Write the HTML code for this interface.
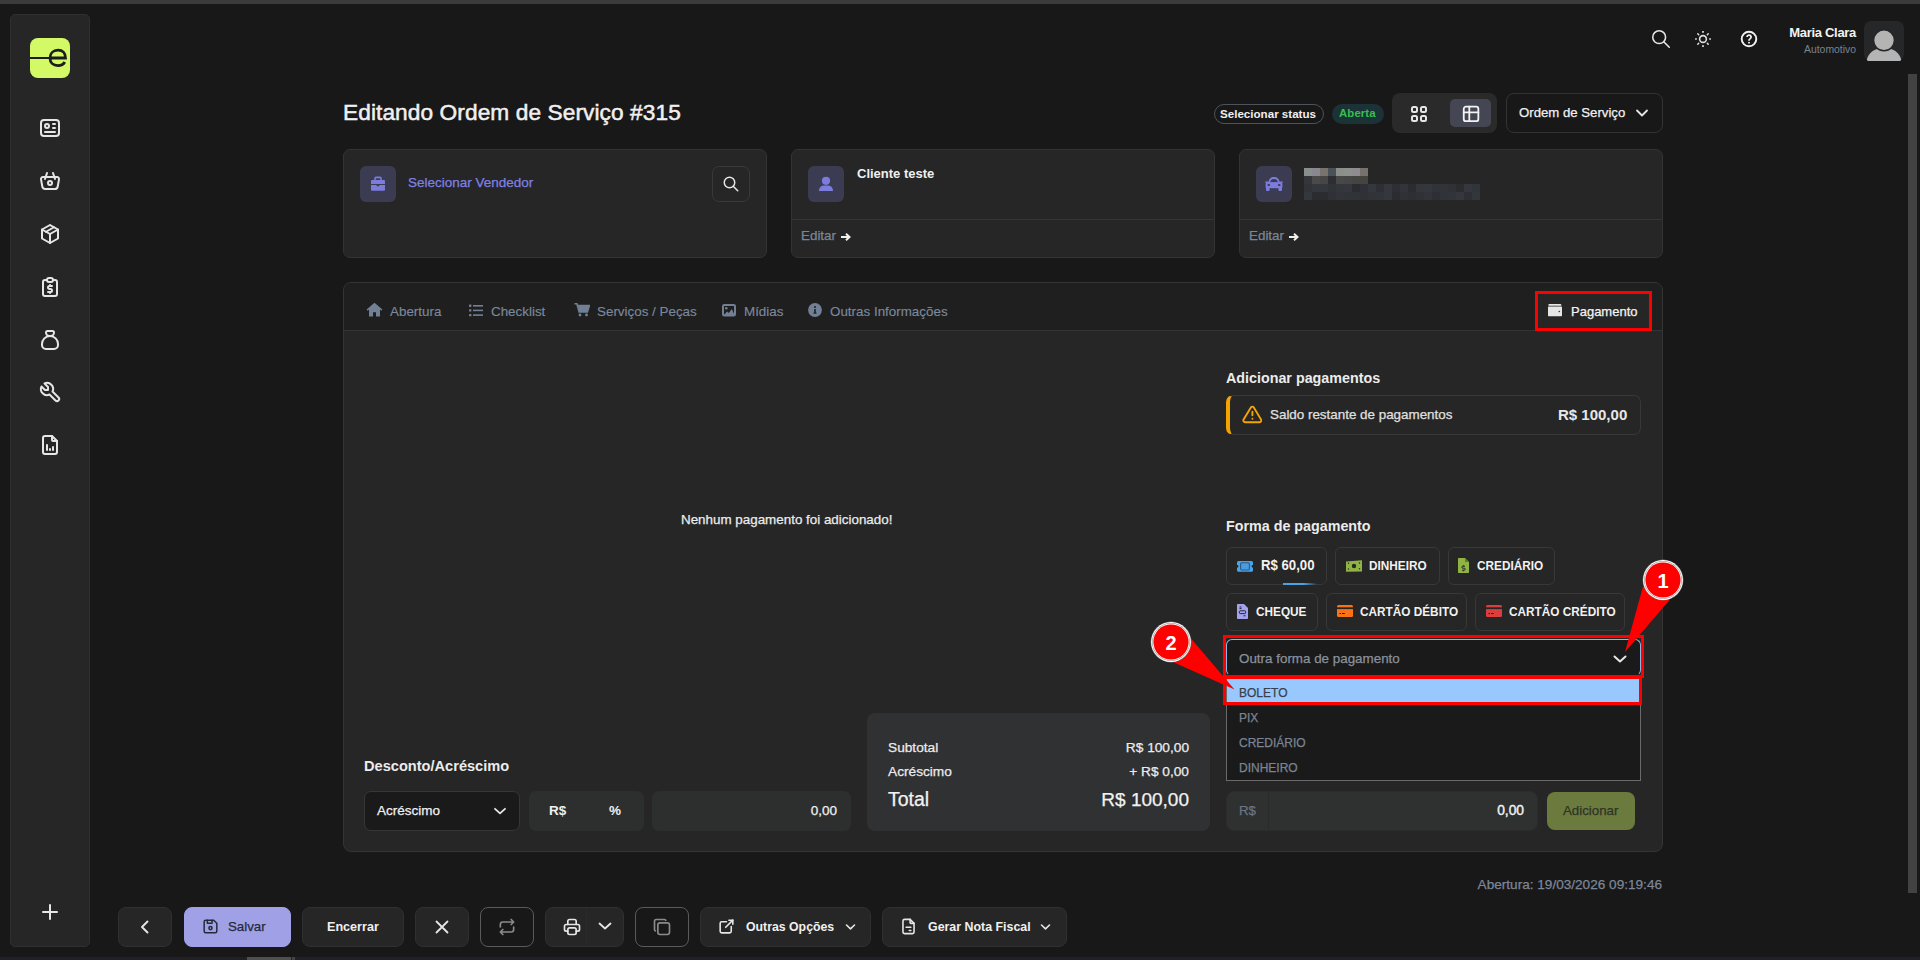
<!DOCTYPE html>
<html><head><meta charset="utf-8">
<style>
*{box-sizing:border-box;margin:0;padding:0}
html,body{width:1920px;height:960px;overflow:hidden;background:#181818;font-family:"Liberation Sans",sans-serif;color:#e6e6e6}
.a{position:absolute}
.t{position:absolute;white-space:nowrap;line-height:1;-webkit-text-stroke:0.25px currentColor}
svg{display:block}
.ico{position:absolute;fill:none;stroke:#e6e6e6;stroke-width:2;stroke-linecap:round;stroke-linejoin:round}
.card{position:absolute;background:#262626;border:1px solid #333;border-radius:7px}
.pbtn{position:absolute;height:38px;border:1px solid #383838;border-radius:6px;background:#262626}
.tab{top:305px;font-size:13.4px;color:#7b889c;-webkit-text-stroke:0.15px #7b889c}
.pbt{font-size:11.8px;font-weight:700;-webkit-text-stroke:0;color:#f2f2f2;transform:scaleY(1.14);transform-origin:0 85%}
.bb{position:absolute;top:907px;height:40px;border:1px solid #303030;border-radius:8px;background:#262626}
</style></head><body>
<!-- top strip -->
<div class="a" style="left:0;top:0;width:1920px;height:4px;background:#3b3b3b"></div>
<!-- bottom strip -->
<div class="a" style="left:0;top:957px;width:1920px;height:3px;background:#202026"></div>
<div class="a" style="left:247px;top:957px;width:44px;height:3px;background:#4f4f4f"></div><div class="a" style="left:292px;top:957px;width:3px;height:3px;background:#444"></div>

<!-- sidebar -->
<div class="a" style="left:10px;top:14px;width:80px;height:933px;background:#262626;border:1px solid #2f2f2f;border-radius:5px"></div>
<div class="a" style="left:30px;top:38px;width:40px;height:40px;background:#d3f966;border-radius:8px;overflow:hidden">
  <div class="a" style="left:0;top:18.6px;width:20px;height:2.8px;background:#1c1c1c"></div>
  <svg class="a" style="left:17px;top:8px" width="22" height="24" viewBox="0 0 22 24"><path d="M3 12 H18.5 C18.5 7 15.5 4.2 11 4.2 C6.2 4.2 3 7.5 3 12 C3 16.6 6.2 19.6 11 19.6 C14.2 19.6 16.5 18.2 17.8 16" fill="none" stroke="#1c1c1c" stroke-width="2.8"/></svg>
</div>
<!-- sidebar icons -->
<svg class="ico" style="left:38px;top:116px" width="24" height="24" viewBox="0 0 24 24"><path d="M3 7a3 3 0 0 1 3 -3h12a3 3 0 0 1 3 3v10a3 3 0 0 1 -3 3h-12a3 3 0 0 1 -3 -3z"/><path d="M9 10m-2 0a2 2 0 1 0 4 0a2 2 0 1 0 -4 0"/><path d="M15 8l2 0"/><path d="M15 12l2 0"/><path d="M7 16l10 0"/></svg>
<svg class="ico" style="left:38px;top:169px" width="24" height="24" viewBox="0 0 24 24"><path d="M10 14a2 2 0 1 0 4 0a2 2 0 0 0 -4 0"/><path d="M5.001 8h13.999a2 2 0 0 1 1.977 2.304l-1.255 7.152a3 3 0 0 1 -2.966 2.544h-9.512a3 3 0 0 1 -2.965 -2.544l-1.255 -7.152a2 2 0 0 1 1.977 -2.304z"/><path d="M17 10l-2 -6"/><path d="M7 10l2 -6"/></svg>
<svg class="ico" style="left:38px;top:222px" width="24" height="24" viewBox="0 0 24 24"><path d="M12 3l8 4.5l0 9l-8 4.5l-8 -4.5l0 -9l8 -4.5"/><path d="M12 12l8 -4.5"/><path d="M12 12l0 9"/><path d="M12 12l-8 -4.5"/><path d="M16 5.25l-8 4.5"/></svg>
<svg class="ico" style="left:38px;top:275px" width="24" height="24" viewBox="0 0 24 24"><path d="M9 5h-2a2 2 0 0 0 -2 2v12a2 2 0 0 0 2 2h10a2 2 0 0 0 2 -2v-12a2 2 0 0 0 -2 -2h-2"/><path d="M9 5a2 2 0 0 1 2 -2h2a2 2 0 0 1 2 2v0a2 2 0 0 1 -2 2h-2a2 2 0 0 1 -2 -2z"/><path d="M14 11h-2.5a1.5 1.5 0 0 0 0 3h1a1.5 1.5 0 0 1 0 3h-2.5"/><path d="M12 17v1m0 -8v1"/></svg>
<svg class="ico" style="left:38px;top:328px" width="24" height="24" viewBox="0 0 24 24"><path d="M9.5 3h5a1.5 1.5 0 0 1 1.5 1.5a3.5 3.5 0 0 1 -3.5 3.5h-1a3.5 3.5 0 0 1 -3.5 -3.5a1.5 1.5 0 0 1 1.5 -1.5z"/><path d="M4 17v-1a8 8 0 1 1 16 0v1a4 4 0 0 1 -4 4h-8a4 4 0 0 1 -4 -4z"/></svg>
<svg class="ico" style="left:38px;top:380px" width="24" height="24" viewBox="0 0 24 24"><path d="M7 10h3v-3l-3.5 -3.5a6 6 0 0 1 8 8l6 6a2 2 0 0 1 -3 3l-6 -6a6 6 0 0 1 -8 -8l3.5 3.5"/></svg>
<svg class="ico" style="left:38px;top:433px" width="24" height="24" viewBox="0 0 24 24"><path d="M14 3v4a1 1 0 0 0 1 1h4"/><path d="M17 21h-10a2 2 0 0 1 -2 -2v-14a2 2 0 0 1 2 -2h7l5 5v11a2 2 0 0 1 -2 2z"/><path d="M9 17l0 -5"/><path d="M12 17l0 -1"/><path d="M15 17l0 -3"/></svg>
<svg class="ico" style="left:38px;top:900px" width="24" height="24" viewBox="0 0 24 24"><path d="M12 5l0 14"/><path d="M5 12l14 0"/></svg>

<!-- header right -->
<svg class="ico" style="left:1650px;top:28px;stroke-width:1.7" width="22" height="22" viewBox="0 0 24 24"><path d="M10 10m-7 0a7 7 0 1 0 14 0a7 7 0 1 0 -14 0"/><path d="M21 21l-6 -6"/></svg>
<svg class="a" style="left:1693px;top:29px" width="20" height="20" viewBox="0 0 20 20"><g fill="none" stroke="#e0e0e0" stroke-width="1.6"><circle cx="10" cy="10" r="3.4"/><path d="M10 2.1v1.7M10 16.2v1.7M2.1 10h1.7M16.2 10h1.7" stroke-linecap="butt" stroke-width="1.7"/><path d="M4.8 4.8l.9 .9M14.3 5.7l.9-.9M4.8 15.2l.9-.9M14.3 14.3l.9 .9" stroke-linecap="round" stroke-width="1.5"/></g></svg>
<svg class="a" style="left:1739px;top:29px" width="20" height="20" viewBox="0 0 20 20"><circle cx="10" cy="10" r="7.3" fill="none" stroke="#f2f2f2" stroke-width="1.9"/><path d="M8 8.1a2.05 2.05 0 1 1 2.9 1.9c-.6 .3 -.9 .7 -.9 1.4v.4" fill="none" stroke="#f2f2f2" stroke-width="1.8"/><rect x="9.1" y="12.9" width="1.8" height="1.6" fill="#f2f2f2"/></svg>
<div class="t" style="right:64px;top:26px;font-size:13px;font-weight:700;-webkit-text-stroke:0;color:#f2f2f2;letter-spacing:-0.3px">Maria Clara</div>
<div class="t" style="right:64px;top:45px;font-size:10.4px;-webkit-text-stroke:0;color:#7a8290">Automotivo</div>
<svg class="a" style="left:1864px;top:21px" width="40" height="40" viewBox="0 0 40 40"><rect width="40" height="40" rx="7" fill="#262729"/><path d="M3 38.3C4.5 31.5 11 27 20 27S35.5 31.5 37 38.3Q37.3 40 35.8 40H4.2Q2.7 40 3 38.3z" fill="#b4b4b4"/><circle cx="20" cy="19.3" r="10.4" fill="#b4b4b4" stroke="#262729" stroke-width="1.4"/></svg>
<div class="a" style="left:1908px;top:74px;width:9px;height:819px;background:#424242"></div>

<!-- title -->
<div class="t" style="left:343px;top:101px;font-size:22.7px;font-weight:400;-webkit-text-stroke:0.5px #f0f0f0;color:#f0f0f0;letter-spacing:0.08px">Editando Ordem de Serviço #315</div>
<div class="a" style="left:1214px;top:104px;width:110px;height:20px;border:1px solid #4e535b;border-radius:10px"></div>
<div class="t" style="left:1220px;top:108px;font-size:11.6px;font-weight:700;-webkit-text-stroke:0;color:#f0f0f0">Selecionar status</div>
<div class="a" style="left:1332px;top:104px;width:52px;height:20px;background:#1b3337;border-radius:10px"></div>
<div class="t" style="left:1339px;top:108px;font-size:11.4px;font-weight:700;-webkit-text-stroke:0;color:#36bf50;letter-spacing:0.1px">Aberta</div>
<div class="a" style="left:1392px;top:93px;width:105px;height:40px;background:#2a2a2a;border-radius:8px"></div>
<div class="a" style="left:1450px;top:99px;width:41px;height:28px;background:#444654;border-radius:5px"></div>
<svg class="ico" style="left:1410px;top:105px;stroke-width:2" width="18" height="18" viewBox="0 0 18 18"><rect x="2" y="2" width="5" height="5" rx="1.5"/><rect x="11" y="2" width="5" height="5" rx="1.5"/><rect x="2" y="11" width="5" height="5" rx="1.5"/><rect x="11" y="11" width="5" height="5" rx="1.5"/></svg>
<svg class="ico" style="left:1462px;top:105px;stroke-width:1.8;stroke:#f4f4f4" width="18" height="18" viewBox="0 0 18 18"><rect x="1.75" y="1.7" width="14.6" height="14.5" rx="2.3"/><path d="M1.75 7.4h14.6M7.3 1.7v14.5"/></svg>
<div class="a" style="left:1506px;top:93px;width:157px;height:40px;border:1px solid #333;border-radius:8px"></div>
<div class="t" style="left:1519px;top:106px;font-size:13.2px;color:#f0f0f0">Ordem de Serviço</div>
<svg class="ico" style="left:1635px;top:107px;stroke-width:1.8" width="14" height="12" viewBox="0 0 14 12"><path d="M2 3.5l5 5l5 -5"/></svg>

<!-- cards -->
<div class="card" style="left:343px;top:149px;width:424px;height:109px"></div>
<div class="a" style="left:360px;top:166px;width:36px;height:36px;background:#3b3b52;border-radius:6px"></div>
<svg class="a" style="left:370px;top:176px" width="16" height="16" viewBox="0 0 16 16"><path d="M5 4v-1.6c0-.6.4-1 1-1h4c.6 0 1 .4 1 1V4" fill="none" stroke="#7c7cdc" stroke-width="1.6"/><path d="M1 5.2c0-.8.5-1.3 1.3-1.3h11.4c.8 0 1.3.5 1.3 1.3V8H1z" fill="#7c7cdc"/><path d="M1 9h5.2l.9 1.2h1.8l.9-1.2H15v4.5c0 .8-.5 1.3-1.3 1.3H2.3c-.8 0-1.3-.5-1.3-1.3z" fill="#7c7cdc"/></svg>
<div class="t" style="left:408px;top:176px;font-size:13.5px;color:#8080e2">Selecionar Vendedor</div>
<div class="a" style="left:712px;top:166px;width:38px;height:36px;border:1px solid #393939;border-radius:7px;background:#262626"></div>
<svg class="ico" style="left:722px;top:175px;stroke-width:2" width="18" height="18" viewBox="0 0 24 24"><path d="M10 10m-7 0a7 7 0 1 0 14 0a7 7 0 1 0 -14 0"/><path d="M21 21l-6 -6"/></svg>

<div class="card" style="left:791px;top:149px;width:424px;height:109px"></div>
<div class="a" style="left:792px;top:219px;width:422px;height:1px;background:#363636"></div>
<div class="a" style="left:808px;top:166px;width:36px;height:36px;background:#3b3b52;border-radius:6px"></div>
<svg class="a" style="left:818px;top:176px" width="16" height="16" viewBox="0 0 16 16"><circle cx="8" cy="4.8" r="4.1" fill="#7c7cdc"/><path d="M1 15c0-3.3 2.2-5.4 5-5.4h4c2.8 0 5 2.1 5 5.4z" fill="#7c7cdc"/></svg>
<div class="t" style="left:857px;top:167px;font-size:13px;font-weight:700;-webkit-text-stroke:0;color:#f0f0f0">Cliente teste</div>
<div class="t" style="left:801px;top:229px;font-size:13.4px;color:#7c8698">Editar</div>
<svg class="a" style="left:840px;top:232px" width="12" height="10" viewBox="0 0 12 10"><path d="M1 5h8M6 1.8l3.5 3.2l-3.5 3.2" fill="none" stroke="#f0f0f0" stroke-width="2"/></svg>

<div class="card" style="left:1239px;top:149px;width:424px;height:109px"></div>
<div class="a" style="left:1240px;top:219px;width:422px;height:1px;background:#363636"></div>
<div class="a" style="left:1256px;top:166px;width:36px;height:36px;background:#3b3b52;border-radius:6px"></div>
<svg class="a" style="left:1264px;top:176px" width="20" height="16" viewBox="0 0 20 16"><path d="M4.3 6.8C4.8 2.6 7 1 10 1s5.2 1.6 5.7 5.8z" fill="#7c7cdc"/><path d="M6.2 6.3C6.6 3.9 7.8 3.1 10 3.1s3.4.8 3.8 3.2z" fill="#3b3b52"/><path d="M1 5.6h3.8v2H2z M19 5.6h-3.8v2H18z" fill="#7c7cdc"/><rect x="1.6" y="6.3" width="16.8" height="6.4" rx="1.8" fill="#7c7cdc"/><ellipse cx="4.8" cy="8.9" rx="1.4" ry="1" fill="#3b3b52"/><ellipse cx="15.2" cy="8.9" rx="1.4" ry="1" fill="#3b3b52"/><rect x="2" y="11" width="3.6" height="4" rx="1" fill="#7c7cdc"/><rect x="14.4" y="11" width="3.6" height="4" rx="1" fill="#7c7cdc"/><rect x="5.6" y="12.3" width="8.8" height="0.8" fill="#3b3b52"/></svg>
<div class="a" style="left:1304px;top:168px;width:64px;height:8px;background:linear-gradient(90deg,#8a8e8c 0 8px,#8a8790 8px 16px,#78736e 16px 24px,#4a5258 24px 32px,#8c8e8a 32px 40px,#8e908c 40px 48px,#8e8c90 48px 56px,#76726c 56px 64px)"></div>
<div class="a" style="left:1304px;top:176px;width:64px;height:8px;background:linear-gradient(90deg,#34363a 0 8px,#4c4a48 8px 16px,#464646 16px 24px,#2c2e32 24px 32px,#484848 32px 40px,#464646 40px 48px,#444442 48px 56px,#46443f 56px 64px)"></div>
<div class="a" style="left:1304px;top:184px;width:176px;height:8px;background:linear-gradient(90deg,#303338 0px 8px,#34373d 8px 16px,#34373d 16px 24px,#303338 24px 32px,#33363b 32px 40px,#34373d 40px 48px,#2a2c30 48px 56px,#2f3136 56px 64px,#34373d 64px 72px,#2d2f34 72px 80px,#34373d 80px 88px,#2d2f34 88px 96px,#31343a 96px 104px,#2a2c30 104px 112px,#33363b 112px 120px,#34373d 120px 128px,#303338 128px 136px,#303338 136px 144px,#2f3136 144px 152px,#2a2c30 152px 160px,#34373d 160px 168px,#31343a 168px 176px)"></div><div class="a" style="left:1304px;top:192px;width:176px;height:8px;background:linear-gradient(90deg,#34373d 0px 8px,#2a2c30 8px 16px,#2a2c30 16px 24px,#2f3136 24px 32px,#31343a 32px 40px,#303338 40px 48px,#303338 48px 56px,#2f3136 56px 64px,#303338 64px 72px,#31343a 72px 80px,#34373d 80px 88px,#2a2c30 88px 96px,#2f3136 96px 104px,#2d2f34 104px 112px,#2f3136 112px 120px,#31343a 120px 128px,#2d2f34 128px 136px,#303338 136px 144px,#31343a 144px 152px,#34373d 152px 160px,#2d2f34 160px 168px,#33363b 168px 176px)"></div>
<div class="t" style="left:1249px;top:229px;font-size:13.4px;color:#7c8698">Editar</div>
<svg class="a" style="left:1288px;top:232px" width="12" height="10" viewBox="0 0 12 10"><path d="M1 5h8M6 1.8l3.5 3.2l-3.5 3.2" fill="none" stroke="#f0f0f0" stroke-width="2"/></svg>

<!-- main panel -->
<div class="a" style="left:343px;top:282px;width:1320px;height:570px;background:#262626;border:1px solid #343434;border-radius:8px;overflow:hidden">
  <div class="a" style="left:0;top:0;width:1318px;height:48px;background:#1f1f1f;border-bottom:1px solid #343434"></div>
</div>

<!-- tabs -->
<svg class="a" style="left:366px;top:302px" width="17" height="15" viewBox="0 0 17 15"><path d="M8.5 0.8L0.6 7.6l1 1.1 1.4-1.2v7h4v-4.2h3v4.2h4v-7l1.4 1.2 1-1.1z" fill="#718094"/></svg>
<div class="t tab" style="left:390px">Abertura</div>
<svg class="a" style="left:469px;top:304px" width="14" height="13" viewBox="0 0 14 13"><rect x="0" y="0.5" width="2.4" height="2.4" rx=".6" fill="#718094"/><rect x="0" y="5.2" width="2.4" height="2.4" rx=".6" fill="#718094"/><rect x="0" y="9.9" width="2.4" height="2.4" rx=".6" fill="#718094"/><rect x="4" y="1" width="10" height="1.6" fill="#718094"/><rect x="4" y="5.6" width="10" height="1.6" fill="#718094"/><rect x="4" y="10.3" width="10" height="1.6" fill="#718094"/></svg>
<div class="t tab" style="left:491px">Checklist</div>
<svg class="a" style="left:574px;top:303px" width="16" height="14" viewBox="0 0 16 14"><path d="M0.5 0.8h2.4l2.2 8.2h8.3l2-6.5H4" fill="none" stroke="#718094" stroke-width="1.6"/><path d="M4 2.5h11.5l-2 6.5h-8.3z" fill="#718094"/><circle cx="6" cy="12" r="1.4" fill="#718094"/><circle cx="12.5" cy="12" r="1.4" fill="#718094"/></svg>
<div class="t tab" style="left:597px">Serviços / Peças</div>
<svg class="a" style="left:722px;top:304px" width="14" height="12.5" viewBox="0 0 14 12.5"><rect x="1" y="1" width="12" height="10.5" rx="1.2" fill="none" stroke="#718094" stroke-width="2"/><circle cx="4.3" cy="4.3" r="1.3" fill="#718094"/><path d="M2 11l3.2-3.6 1.6 1.5 3-4 2.8 6.1z" fill="#718094"/></svg>
<div class="t tab" style="left:744px">Mídias</div>
<svg class="a" style="left:808px;top:303px" width="14" height="14" viewBox="0 0 14 14"><circle cx="7" cy="7" r="6.9" fill="#718094"/><rect x="6.2" y="6.1" width="1.6" height="4.2" fill="#1f1f1f"/><rect x="5.4" y="9.6" width="3.2" height="1" fill="#1f1f1f"/><circle cx="7" cy="4" r="1" fill="#1f1f1f"/></svg>
<div class="t tab" style="left:830px">Outras Informações</div>

<div class="a" style="left:1535px;top:291px;width:116.5px;height:39.5px;background:#262626;border:3.3px solid #f00"></div>
<svg class="a" style="left:1548px;top:304px" width="14" height="13" viewBox="0 0 14 13"><path d="M1.2 0h11.3c.5 0 .8.3.8.8v.9H0.4v-.9c0-.5.3-.8.8-.8z" fill="#e6e6e6"/><path d="M0 3.4c0-.6.5-1 1-1h12c.6 0 1 .4 1 1v7.8c0 .6-.5 1-1 1H1c-.6 0-1-.4-1-1z" fill="#e6e6e6"/><circle cx="11.3" cy="7.5" r=".8" fill="#333"/></svg>
<div class="t" style="left:1571px;top:305px;font-size:13px;color:#f4f4f4">Pagamento</div>

<!-- empty state -->
<div class="t" style="left:681px;top:513px;font-size:13.4px;color:#ececec">Nenhum pagamento foi adicionado!</div>

<!-- right column -->
<div class="t" style="left:1226px;top:371px;font-size:14.3px;font-weight:700;-webkit-text-stroke:0;color:#ececec">Adicionar pagamentos</div>
<div class="a" style="left:1226px;top:395px;width:415px;height:40px;border:1px solid #383838;border-left:4px solid #f5a300;border-radius:7px"></div>
<svg class="ico" style="left:1241.6px;top:403.8px;stroke:#f5a300;stroke-width:2.2" width="20.8" height="20.8" viewBox="0 0 24 24"><path d="M10.24 3.957l-8.422 14.06a1.989 1.989 0 0 0 1.7 2.983h16.845a1.989 1.989 0 0 0 1.7 -2.983l-8.423 -14.06a1.989 1.989 0 0 0 -3.4 0z"/><path d="M12 9v4"/><path d="M12 17h.01"/></svg>
<div class="t" style="left:1270px;top:408px;font-size:13.4px;color:#e0e0e0">Saldo restante de pagamentos</div>
<div class="t" style="left:1558px;top:407px;font-size:15px;font-weight:700;-webkit-text-stroke:0;color:#e8e8e8">R$ 100,00</div>

<div class="t" style="left:1226px;top:519px;font-size:14.3px;font-weight:700;-webkit-text-stroke:0;color:#ececec">Forma de pagamento</div>

<div class="pbtn" style="left:1226px;top:547px;width:101px"></div>
<svg class="a" style="left:1237px;top:560.7px" width="16" height="11" viewBox="0 0 16 11"><path d="M1.5 0h13a1.5 1.5 0 0 1 1.5 1.5v2.4a1.45 1.45 0 0 0 0 2.9v2.4a1.5 1.5 0 0 1 -1.5 1.5h-13a1.5 1.5 0 0 1 -1.5 -1.5v-2.4a1.45 1.45 0 0 0 0 -2.9v-2.4a1.5 1.5 0 0 1 1.5 -1.5z" fill="#4aa3e8"/><rect x="3.6" y="1.7" width="8.8" height="7.3" rx="1.2" fill="#4a9ce0" stroke="#2f5a80" stroke-width="1.1"/></svg>
<div class="t pbt" style="top:559px;left:1261px;font-size:13.2px">R$ 60,00</div>
<div class="a" style="left:1283px;top:583px;width:34px;height:2px;background:linear-gradient(90deg,#4aa3e8 60%,rgba(74,163,232,0))"></div>

<div class="pbtn" style="left:1335px;top:547px;width:105px"></div>
<svg class="a" style="left:1346px;top:560px" width="16" height="12" viewBox="0 0 16 12"><path d="M0 1.5l16-1.2v11.2L0 11.7z" fill="#8fb443"/><circle cx="8" cy="6" r="2.2" fill="#262626"/><circle cx="2.5" cy="3.3" r=".7" fill="#262626"/><circle cx="13.5" cy="3" r=".7" fill="#262626"/><circle cx="2.5" cy="9" r=".7" fill="#262626"/><circle cx="13.5" cy="8.7" r=".7" fill="#262626"/></svg>
<div class="t pbt" style="top:561px;left:1369px">DINHEIRO</div>

<div class="pbtn" style="left:1448px;top:547px;width:107px"></div>
<svg class="a" style="left:1458px;top:558px" width="11" height="15" viewBox="0 0 11 15"><path d="M0 1c0-.6.4-1 1-1h6l4 4v10c0 .6-.4 1-1 1H1c-.6 0-1-.4-1-1z" fill="#8fb443"/><path d="M7 0v3.5c0 .3.2.5.5.5H11" fill="#5f7a2a"/><path d="M7 8.2H4.8a1 1 0 0 0 0 2h1.4a1 1 0 0 1 0 2H4M5.5 7.3v.9m0 4.2v.9" fill="none" stroke="#262626" stroke-width="1"/></svg>
<div class="t pbt" style="top:561px;left:1477px">CREDIÁRIO</div>

<div class="pbtn" style="left:1226px;top:593px;width:92px"></div>
<svg class="a" style="left:1237px;top:604px" width="11" height="15" viewBox="0 0 11 15"><path d="M0 1c0-.6.4-1 1-1h6l4 4v10c0 .6-.4 1-1 1H1c-.6 0-1-.4-1-1z" fill="#a3a3ef"/><rect x="2.4" y="6.8" width="6.2" height="2.8" rx=".8" fill="none" stroke="#262626" stroke-width="1"/><path d="M2.5 3h2M2.5 4.6h2M6.5 11.8h2" stroke="#262626" stroke-width="1"/></svg>
<div class="t pbt" style="top:607px;left:1256px">CHEQUE</div>

<div class="pbtn" style="left:1326px;top:593px;width:141px"></div>
<svg class="a" style="left:1337px;top:605px" width="16" height="12" viewBox="0 0 16 12"><rect x="0" y="0" width="16" height="12" rx="1.5" fill="#f97316"/><rect x="0" y="2.3" width="16" height="1.8" fill="#262626"/><rect x="2.5" y="8" width="1.5" height="1" fill="#262626"/><rect x="5" y="8" width="2.8" height="1" fill="#262626"/></svg>
<div class="t pbt" style="top:607px;left:1360px">CARTÃO DÉBITO</div>

<div class="pbtn" style="left:1475px;top:593px;width:150px"></div>
<svg class="a" style="left:1486px;top:605px" width="16" height="12" viewBox="0 0 16 12"><rect x="0" y="0" width="16" height="12" rx="1.5" fill="#dc3e3e"/><rect x="0" y="2.3" width="16" height="1.8" fill="#262626"/><rect x="2.5" y="8" width="1.5" height="1" fill="#262626"/><rect x="5" y="8" width="2.8" height="1" fill="#262626"/></svg>
<div class="t pbt" style="top:607px;left:1509px">CARTÃO CRÉDITO</div>

<!-- bottom left -->
<div class="t" style="left:364px;top:759px;font-size:14.6px;font-weight:700;-webkit-text-stroke:0;color:#ececec">Desconto/Acréscimo</div>
<div class="a" style="left:364px;top:791px;width:156px;height:40px;background:#1a1a1a;border:1px solid #363636;border-radius:7px"></div>
<div class="t" style="left:377px;top:804px;font-size:13.5px;color:#f0f0f0">Acréscimo</div>
<svg class="ico" style="left:493px;top:805px;stroke-width:1.8" width="14" height="12" viewBox="0 0 14 12"><path d="M2 3.8l5 4.6l5 -4.6"/></svg>
<div class="a" style="left:529px;top:791px;width:115px;height:40px;background:#2d2e2e;border-radius:7px"></div>
<div class="t" style="left:549px;top:804px;font-size:13.5px;font-weight:700;-webkit-text-stroke:0;color:#f0f0f0">R$</div>
<div class="t" style="left:609px;top:804px;font-size:13.5px;font-weight:700;-webkit-text-stroke:0;color:#f0f0f0">%</div>
<div class="a" style="left:652px;top:791px;width:199px;height:40px;background:#2d2e2e;border-radius:7px"></div>
<div class="t" style="right:1083px;top:804px;font-size:13.5px;color:#f0f0f0">0,00</div>

<!-- summary -->
<div class="a" style="left:867px;top:713px;width:343px;height:118px;background:#303133;border-radius:8px"></div>
<div class="t" style="left:888px;top:741px;font-size:13.7px;color:#ececec">Subtotal</div>
<div class="t" style="right:731px;top:741px;font-size:13.7px;color:#ececec">R$ 100,00</div>
<div class="t" style="left:888px;top:765px;font-size:13.7px;color:#ececec">Acréscimo</div>
<div class="t" style="right:731px;top:765px;font-size:13.7px;color:#ececec">+ R$ 0,00</div>
<div class="t" style="left:888px;top:790px;font-size:19.5px;color:#f2f2f2">Total</div>
<div class="t" style="right:731px;top:790px;font-size:19px;color:#f2f2f2">R$ 100,00</div>

<!-- right bottom input -->
<div class="a" style="left:1226px;top:791px;width:312px;height:40px;background:#2f3030;border:1px solid #2c2c2c;border-radius:8px"></div>
<div class="a" style="left:1268px;top:792px;width:1px;height:38px;background:#292a2a"></div>
<div class="t" style="left:1239px;top:804px;font-size:13.3px;color:#6c7484">R$</div>
<div class="t" style="right:396px;top:804px;font-size:13.8px;-webkit-text-stroke:0.4px #f0f0f0;color:#f0f0f0">0,00</div>
<div class="a" style="left:1547px;top:792px;width:88px;height:38px;background:#6b7a3d;border-radius:8px"></div>
<div class="t" style="left:1563px;top:804px;font-size:13.3px;color:#2f3426">Adicionar</div>

<div class="t" style="right:258px;top:878px;font-size:13.6px;color:#7c8698">Abertura: 19/03/2026 09:19:46</div>

<!-- dropdown -->
<div class="a" style="left:1226px;top:639px;width:415px;height:37px;background:#1a1a1a;border:1px solid #8fb6e6;border-bottom-color:#1a1a1a;border-radius:6px"></div>
<div class="t" style="left:1239px;top:652px;font-size:13.4px;color:#8a919c">Outra forma de pagamento</div>
<svg class="ico" style="left:1613px;top:653px;stroke-width:2" width="14" height="12" viewBox="0 0 14 12"><path d="M1.5 3.5l5.5 5l5.5 -5"/></svg>
<div class="a" style="left:1226px;top:676px;width:415px;height:105px;background:#1a1a1a;border:1px solid #6a6a6a"></div>
<div class="a" style="left:1227px;top:679px;width:413px;height:23px;background:#99c8ff"></div>
<div class="t" style="left:1239px;top:687px;font-size:12px;color:#3a3f48">BOLETO</div>
<div class="t" style="left:1239px;top:712px;font-size:12px;color:#7a8494">PIX</div>
<div class="t" style="left:1239px;top:737px;font-size:12px;color:#7a8494">CREDIÁRIO</div>
<div class="t" style="left:1239px;top:762px;font-size:12px;color:#7a8494">DINHEIRO</div>

<!-- annotation boxes -->
<div class="a" style="left:1223px;top:635px;width:421px;height:43px;border:3.5px solid #f00"></div>
<div class="a" style="left:1223px;top:676px;width:419px;height:29px;border:3.5px solid #f00"></div>

<!-- callouts -->
<svg class="a" style="left:0;top:0;pointer-events:none" width="1920" height="960" viewBox="0 0 1920 960">
  <path d="M1643 586.5 L1670 599.5 L1625 652 Z" fill="#f00"/>
  <circle cx="1663" cy="580" r="20.4" fill="#7a7a7a"/>
  <circle cx="1663" cy="580" r="19.9" fill="#fff"/>
  <circle cx="1663" cy="580" r="18.9" fill="#8a8a8a"/>
  <circle cx="1663" cy="580" r="18.4" fill="#fff"/>
  <circle cx="1663" cy="580" r="17.6" fill="#f00"/>
  <text x="1663" y="587.5" text-anchor="middle" font-family="Liberation Sans" font-weight="700" font-size="20" fill="#fff">1</text>
  <path d="M1191 638.5 L1174 662.5 L1234.5 689.5 Z" fill="#f00"/>
  <circle cx="1171" cy="642" r="20.4" fill="#7a7a7a"/>
  <circle cx="1171" cy="642" r="19.9" fill="#fff"/>
  <circle cx="1171" cy="642" r="18.9" fill="#8a8a8a"/>
  <circle cx="1171" cy="642" r="18.4" fill="#fff"/>
  <circle cx="1171" cy="642" r="17.6" fill="#f00"/>
  <text x="1171" y="649.5" text-anchor="middle" font-family="Liberation Sans" font-weight="700" font-size="20" fill="#fff">2</text>
</svg>

<!-- bottom toolbar -->
<div class="bb" style="left:118px;width:54px"></div>
<svg class="ico" style="left:136px;top:918px;stroke-width:1.9" width="18" height="18" viewBox="0 0 18 18"><path d="M11.5 3.5l-5.5 5.5l5.5 5.5"/></svg>
<div class="bb" style="left:184px;width:107px;background:#a0a0e6;border-color:#a0a0e6"></div>
<svg class="ico" style="left:201px;top:917px;stroke:#252a3a;stroke-width:1.9" width="19" height="19" viewBox="0 0 24 24"><path d="M6 4h10l4 4v10a2 2 0 0 1 -2 2h-12a2 2 0 0 1 -2 -2v-12a2 2 0 0 1 2 -2"/><path d="M12 14m-2 0a2 2 0 1 0 4 0a2 2 0 1 0 -4 0"/><path d="M14 4l0 4l-6 0l0 -4"/></svg>
<div class="t" style="left:228px;top:920px;font-size:13.3px;color:#252a3a">Salvar</div>
<div class="bb" style="left:302px;width:102px"></div>
<div class="t" style="left:327px;top:921px;font-size:12.6px;font-weight:700;-webkit-text-stroke:0;color:#f0f0f0">Encerrar</div>
<div class="bb" style="left:415px;width:54px"></div>
<svg class="ico" style="left:433px;top:918px;stroke-width:1.8" width="18" height="18" viewBox="0 0 18 18"><path d="M3.5 3.5l11 11M14.5 3.5l-11 11"/></svg>
<div class="bb" style="left:480px;width:54px;background:#181818;border-color:#5a5a5a"></div>
<svg class="ico" style="left:497px;top:917px;stroke:#8a8a8a;stroke-width:2" width="20" height="20" viewBox="0 0 24 24"><path d="M4 12v-3a3 3 0 0 1 3 -3h13m-3 -3l3 3l-3 3"/><path d="M20 12v3a3 3 0 0 1 -3 3h-13m3 3l-3 -3l3 -3"/></svg>
<div class="bb" style="left:545px;width:79px"></div>
<div class="a" style="left:586px;top:908px;width:1px;height:38px;background:#2a2a2a"></div>
<svg class="ico" style="left:562px;top:917px;stroke-width:2" width="20" height="20" viewBox="0 0 24 24"><path d="M17 17h2a2 2 0 0 0 2 -2v-4a2 2 0 0 0 -2 -2h-14a2 2 0 0 0 -2 2v4a2 2 0 0 0 2 2h2"/><path d="M17 9v-4a2 2 0 0 0 -2 -2h-6a2 2 0 0 0 -2 2v4"/><path d="M7 13m0 2a2 2 0 0 1 2 -2h6a2 2 0 0 1 2 2v4a2 2 0 0 1 -2 2h-6a2 2 0 0 1 -2 -2z"/></svg>
<svg class="ico" style="left:598px;top:920px;stroke-width:1.8" width="14" height="12" viewBox="0 0 14 12"><path d="M1.5 3.5l5.5 5l5.5 -5"/></svg>
<div class="bb" style="left:635px;width:54px;background:#181818;border-color:#5a5a5a"></div>
<svg class="ico" style="left:652px;top:917px;stroke:#8a8a8a;stroke-width:2" width="20" height="20" viewBox="0 0 24 24"><path d="M7 9.667a2.667 2.667 0 0 1 2.667 -2.667h8.666a2.667 2.667 0 0 1 2.667 2.667v8.666a2.667 2.667 0 0 1 -2.667 2.667h-8.666a2.667 2.667 0 0 1 -2.667 -2.667z"/><path d="M4.012 16.737a2.005 2.005 0 0 1 -1.012 -1.737v-10c0 -1.1 .9 -2 2 -2h10c.75 0 1.158 .385 1.5 1"/></svg>
<div class="bb" style="left:700px;width:171px"></div>
<svg class="ico" style="left:717px;top:917px;stroke-width:2" width="19" height="19" viewBox="0 0 24 24"><path d="M12 6h-6a2 2 0 0 0 -2 2v10a2 2 0 0 0 2 2h10a2 2 0 0 0 2 -2v-6"/><path d="M11 13l9 -9"/><path d="M15 4h5v5"/></svg>
<div class="t" style="left:746px;top:921px;font-size:12.3px;font-weight:700;-webkit-text-stroke:0;color:#f0f0f0">Outras Opções</div>
<svg class="ico" style="left:845px;top:922px;stroke-width:1.6" width="11" height="10" viewBox="0 0 11 10"><path d="M1.5 3l4 3.8l4 -3.8"/></svg>
<div class="bb" style="left:882px;width:185px"></div>
<svg class="ico" style="left:899px;top:917px;stroke-width:2" width="19" height="19" viewBox="0 0 24 24"><path d="M14 3v4a1 1 0 0 0 1 1h4"/><path d="M17 21h-10a2 2 0 0 1 -2 -2v-14a2 2 0 0 1 2 -2h7l5 5v11a2 2 0 0 1 -2 2z"/><path d="M9 13h6"/><path d="M13 17h2"/></svg>
<div class="t" style="left:928px;top:921px;font-size:12.4px;font-weight:700;-webkit-text-stroke:0;color:#f0f0f0">Gerar Nota Fiscal</div>
<svg class="ico" style="left:1040px;top:922px;stroke-width:1.6" width="11" height="10" viewBox="0 0 11 10"><path d="M1.5 3l4 3.8l4 -3.8"/></svg>
</body></html>
